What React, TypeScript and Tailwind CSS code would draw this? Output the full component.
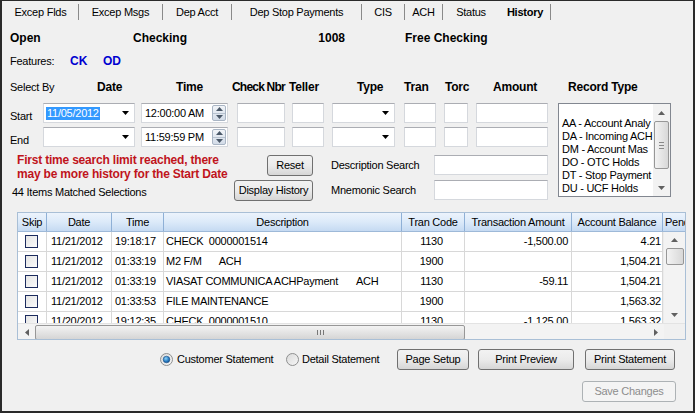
import React from 'react'

const tabs = [
  { label: 'Excep Flds', w: 'w-[75px]', sep: true },
  { label: 'Excep Msgs', w: 'w-[83px]', sep: true },
  { label: 'Dep Acct', w: 'w-[68px]', sep: true },
  { label: 'Dep Stop Payments', w: 'w-[129px]', sep: true },
  { label: 'CIS', w: 'w-[42px]', sep: true },
  { label: 'ACH', w: 'w-[37px]', sep: true },
  { label: 'Status', w: 'w-[56px]', sep: false },
  { label: 'History', w: 'w-[50px]', sep: true, active: true },
]

const rows = [
  { date: '11/21/2012', time: '19:18:17', desc: 'CHECK  0000001514', extra: '', code: '1130', amt: '-1,500.00', bal: '4.21' },
  { date: '11/21/2012', time: '01:33:19', desc: 'M2 F/M', extra: 'ml-[17px]', code: '1900', amt: '', bal: '1,504.21' },
  { date: '11/21/2012', time: '01:33:19', desc: 'VIASAT COMMUNICA ACHPayment', extra: 'ml-[18px]', code: '1130', amt: '-59.11', bal: '1,504.21' },
  { date: '11/21/2012', time: '01:33:53', desc: 'FILE MAINTENANCE', extra: '', code: '1900', amt: '', bal: '1,563.32' },
  { date: '11/20/2012', time: '19:12:35', desc: 'CHECK  0000001510', extra: '', code: '1130', amt: '-1,125.00', bal: '1,563.32' },
]

const recordTypes = ['', 'AA - Account Analy', 'DA - Incoming ACH', 'DM - Account Mas', 'DO - OTC Holds', 'DT - Stop Payment', 'DU - UCF Holds']

function Arrow({ dir, color = '#000' }: { dir: 'up' | 'down' | 'left' | 'right'; color?: string }) {
  const d = {
    down: 'M0 0h7L3.5 4z',
    up: 'M0 4h7L3.5 0z',
    left: 'M4 0v7L0 3.5z',
    right: 'M0 0v7L4 3.5z',
  }[dir]
  const horiz = dir === 'left' || dir === 'right'
  return (
    <svg width={horiz ? 4 : 7} height={horiz ? 7 : 4} viewBox={horiz ? '0 0 4 7' : '0 0 7 4'}>
      <path d={d} fill={color} />
    </svg>
  )
}

function TextBox({ className = '' }: { className?: string }) {
  return <div className={`h-[20px] bg-white border border-[#d5d8dd] border-t-[#abadb3] ${className}`} />
}

function Combo({ className = '', value }: { className?: string; value?: string }) {
  return (
    <div className={`h-[20px] bg-white border border-[#d5d8dd] border-t-[#abadb3] flex items-center ${className}`}>
      {value && <span className="ml-[2px] px-[1px] bg-[#3399ff] text-white leading-[13px]">{value}</span>}
      <div className="ml-auto w-[18px] h-full flex items-center justify-center">
        <Arrow dir="down" />
      </div>
    </div>
  )
}

function TimeBox({ value }: { value: string }) {
  return (
    <div className="w-[87px] h-[20px] bg-white border border-[#d5d8dd] border-t-[#abadb3] flex items-center pl-[3px]">
      <span>{value}</span>
      <div className="ml-auto mr-[1px] w-[14px] h-[16px] flex flex-col border border-[#a9b5c4] rounded-[2px] bg-gradient-to-b from-[#f1f4f8] to-[#d3dce8]">
        <div className="flex-1 flex items-center justify-center border-b border-[#b8c3d0]">
          <Arrow dir="up" color="#4a5868" />
        </div>
        <div className="flex-1 flex items-center justify-center">
          <Arrow dir="down" color="#4a5868" />
        </div>
      </div>
    </div>
  )
}

function Btn({ className = '', children, disabled }: { className?: string; children: React.ReactNode; disabled?: boolean }) {
  return (
    <div
      className={`h-[21px] flex items-center justify-center whitespace-nowrap rounded-[3px] border ${
        disabled
          ? 'border-[#adb2b5] bg-[#f4f4f4] text-[#8d8d8d]'
          : 'border-[#707070] bg-gradient-to-b from-[#f2f2f2] via-[#ebebeb] to-[#d6d6d6] text-black'
      } ${className}`}
    >
      {children}
    </div>
  )
}

function Radio({ checked }: { checked?: boolean }) {
  return (
    <svg width="13" height="13" viewBox="0 0 13 13">
      <defs>
        <linearGradient id={checked ? 'rg1' : 'rg2'} x1="0" y1="0" x2="1" y2="1">
          <stop offset="0" stopColor="#d9d9d9" />
          <stop offset="1" stopColor="#f7f7f7" />
        </linearGradient>
        <radialGradient id="dot" cx="0.4" cy="0.35" r="0.7">
          <stop offset="0" stopColor="#8ed2f8" />
          <stop offset="0.6" stopColor="#2b7fc4" />
          <stop offset="1" stopColor="#0f4a8a" />
        </radialGradient>
      </defs>
      <circle cx="6.5" cy="6.5" r="6" fill={`url(#${checked ? 'rg1' : 'rg2'})`} stroke="#8e8f8f" />
      {checked && <circle cx="6.5" cy="6.5" r="3.3" fill="url(#dot)" stroke="#1b4f86" strokeWidth="0.6" />}
    </svg>
  )
}

function CheckBox() {
  return <div className="w-[13px] h-[13px] border border-[#1c2b5e] bg-gradient-to-br from-[#e4e4e4] to-[#fbfbfb]" />
}

export default function App() {
  return (
    <div className="w-[695px] h-[413px] overflow-hidden bg-[#f0f0f0] border-x-2 border-b-2 border-t border-[#2a2a2a] flex flex-col text-[11px] tracking-[-0.25px] text-black whitespace-nowrap font-['Liberation_Sans',Arial,sans-serif]">
      {/* Tabs */}
      <div className="h-[20px] flex pl-[1px]">
        {tabs.map((t) => (
          <React.Fragment key={t.label}>
            <div className={`${t.w} h-full flex items-center justify-center pt-[2px] ${t.active ? 'font-bold' : ''}`}>{t.label}</div>
            <div className={`w-px h-[16px] self-end mb-[1px] ${t.sep ? 'bg-[#8a8a8a]' : 'bg-transparent'}`} />
          </React.Fragment>
        ))}
      </div>

      {/* Account summary */}
      <div className="flex h-[16px] mt-[9px] items-center font-bold text-[12px] tracking-normal">
        <div className="ml-[8px] w-[123px]">Open</div>
        <div className="w-[151px]">Checking</div>
        <div className="w-[61px] text-right">1008</div>
        <div className="ml-[60px]">Free Checking</div>
      </div>

      <div className="flex h-[16px] mt-[7px] items-center">
        <div className="ml-[8px] w-[60px]">Features:</div>
        <div className="w-[33px] font-bold text-[12px] tracking-normal text-[#0000d0]">CK</div>
        <div className="font-bold text-[12px] tracking-normal text-[#0000d0]">OD</div>
      </div>

      {/* Column labels */}
      <div className="flex h-[16px] mt-[10px] items-center">
        <div className="ml-[8px] w-[87px]">Select By</div>
        <div className="flex font-bold text-[12px] tracking-[-0.2px]">
          <div className="w-[79px]">Date</div>
          <div className="w-[56px]">Time</div>
          <div className="w-[57px] tracking-[-0.8px]">Check Nbr</div>
          <div className="w-[68px]">Teller</div>
          <div className="w-[47px]">Type</div>
          <div className="w-[41px]">Tran</div>
          <div className="w-[48px]">Torc</div>
          <div className="w-[75px]">Amount</div>
          <div>Record Type</div>
        </div>
      </div>

      {/* Selection form */}
      <div className="flex mt-[8px]">
        <div className="ml-[8px] w-[538px] flex flex-col">
          <div className="flex h-[20px]">
            <div className="w-[33px] pt-[7px] leading-[13px]">Start</div>
            <Combo className="w-[92px]" value="11/05/2012" />
            <div className="ml-[6px]"><TimeBox value="12:00:00 AM" /></div>
            <TextBox className="ml-[9px] w-[48px]" />
            <TextBox className="ml-[7px] w-[32px]" />
            <Combo className="ml-[8px] w-[63px]" />
            <TextBox className="ml-[9px] w-[32px]" />
            <TextBox className="ml-[8px] w-[24px]" />
            <TextBox className="ml-[8px] w-[72px]" />
          </div>
          <div className="flex h-[20px] mt-[4px]">
            <div className="w-[33px] pt-[7px] leading-[13px]">End</div>
            <Combo className="w-[92px]" />
            <div className="ml-[6px]"><TimeBox value="11:59:59 PM" /></div>
            <TextBox className="ml-[9px] w-[48px]" />
            <TextBox className="ml-[7px] w-[32px]" />
            <Combo className="ml-[8px] w-[63px]" />
            <TextBox className="ml-[9px] w-[32px]" />
            <TextBox className="ml-[8px] w-[24px]" />
            <TextBox className="ml-[8px] w-[72px]" />
          </div>

          <div className="flex mt-[5px]">
            <div className="w-[225px] flex flex-col">
              <div className="pl-[7px] pt-[1px] leading-[14px] font-bold text-[12px] tracking-[-0.2px] text-[#c0141c]">
                <div>First time search limit reached, there</div>
                <div>may be more history for the Start Date</div>
              </div>
              <div className="mt-[5px] pl-[2px] leading-[13px]">44 Items Matched Selections</div>
            </div>
            <div className="w-[78px] flex flex-col items-end pt-[3px]">
              <Btn className="w-[46px]">Reset</Btn>
              <Btn className="mt-[4px] w-[79px]">Display History</Btn>
            </div>
            <div className="w-[121px] pl-[18px] pt-[3px] flex flex-col">
              <div className="h-[20px] leading-[20px]">Description Search</div>
              <div className="h-[20px] leading-[20px] mt-[5px]">Mnemonic Search</div>
            </div>
            <div className="w-[114px] pt-[3px] flex flex-col">
              <TextBox className="w-[114px]" />
              <TextBox className="w-[114px] mt-[5px]" />
            </div>
          </div>
        </div>

        {/* Record type list */}
        <div className="ml-[10px] w-[113px] h-[94px] bg-white border border-[#828790] flex">
          <div className="flex-1 overflow-hidden pl-[3px]">
            {recordTypes.map((r, i) => (
              <div key={i} className="h-[13px] leading-[13px]">{r}</div>
            ))}
          </div>
          <div className="w-[17px] bg-[#f2f2f2] flex flex-col items-center">
            <div className="h-[17px] flex items-center justify-center"><Arrow dir="up" color="#606060" /></div>
            <div className="w-[15px] h-[48px] rounded-[2px] border border-[#979797] bg-gradient-to-r from-[#f3f3f3] to-[#d8d8d8] flex flex-col items-center justify-center gap-[2px]">
              <div className="w-[5px] h-px bg-[#888]" />
              <div className="w-[5px] h-px bg-[#888]" />
              <div className="w-[5px] h-px bg-[#888]" />
            </div>
            <div className="flex-1" />
            <div className="h-[17px] flex items-center justify-center"><Arrow dir="down" color="#606060" /></div>
          </div>
        </div>
      </div>

      {/* History grid */}
      <div className="ml-[15px] mt-[11px] w-[669px] h-[128px] border border-[#a9bfd6] bg-white flex flex-col overflow-hidden">
        <div className="h-[19px] flex shrink-0 bg-gradient-to-b from-[#ecf3fc] via-[#dceaf9] to-[#c5daf2] border-b border-[#9eb9d8]">
          <div className="w-[29px] shrink-0 border-r border-[#8fb0d6] flex items-center justify-center">Skip</div>
          <div className="w-[65px] shrink-0 border-r border-[#8fb0d6] flex items-center justify-center">Date</div>
          <div className="w-[52px] shrink-0 border-r border-[#8fb0d6] flex items-center justify-center">Time</div>
          <div className="w-[238px] shrink-0 border-r border-[#8fb0d6] flex items-center justify-center">Description</div>
          <div className="w-[63px] shrink-0 border-r border-[#8fb0d6] flex items-center justify-center">Tran Code</div>
          <div className="w-[107px] shrink-0 border-r border-[#8fb0d6] flex items-center justify-center">Transaction Amount</div>
          <div className="w-[91px] shrink-0 border-r border-[#8fb0d6] flex items-center justify-center">Account Balance</div>
          <div className="w-[60px] shrink-0 flex items-center pl-[2px]">Pending</div>
        </div>
        <div className="h-[91px] flex shrink-0">
          <div className="w-[645px] overflow-hidden">
            {rows.map((r, i) => (
              <div key={i} className="h-[20px] flex border-b border-[#d8d8d8]">
                <div className="w-[29px] shrink-0 border-r border-[#d8d8d8] flex items-center pl-[7px]"><CheckBox /></div>
                <div className="w-[65px] shrink-0 border-r border-[#d8d8d8] flex items-center pl-[4px]">{r.date}</div>
                <div className="w-[52px] shrink-0 border-r border-[#d8d8d8] flex items-center pl-[3px]">{r.time}</div>
                <div className="w-[238px] shrink-0 border-r border-[#d8d8d8] flex items-center pl-[2px] whitespace-pre">
                  {r.desc}
                  {r.extra && <span className={r.extra}>ACH</span>}
                </div>
                <div className="w-[63px] shrink-0 border-r border-[#d8d8d8] flex items-center justify-center pr-[3px]">{r.code}</div>
                <div className="w-[107px] shrink-0 border-r border-[#d8d8d8] flex items-center justify-end pr-[3px]">{r.amt}</div>
                <div className="w-[91px] shrink-0 border-r border-[#d8d8d8] flex items-center justify-end pr-[1px]">{r.bal}</div>
              </div>
            ))}
          </div>
          <div className="w-[22px] bg-[#f3f3f3] border-l border-[#ececec] flex flex-col items-center">
            <div className="h-[16px] flex items-center justify-center"><Arrow dir="up" color="#606060" /></div>
            <div className="w-[18px] h-[17px] rounded-[2px] border border-[#979797] bg-gradient-to-r from-[#f3f3f3] to-[#d8d8d8]" />
            <div className="flex-1" />
            <div className="h-[17px] flex items-center justify-center"><Arrow dir="down" color="#606060" /></div>
          </div>
        </div>
        <div className="h-[17px] flex shrink-0 border-t border-[#e3e3e3]">
          <div className="w-[646px] bg-[#f3f3f3] flex items-center">
            <div className="w-[17px] flex items-center justify-center"><Arrow dir="left" color="#606060" /></div>
            <div className="w-[430px] h-[15px] rounded-[2px] border border-[#979797] bg-gradient-to-b from-[#f3f3f3] to-[#d5d5d5] flex items-center">
              <div className="ml-[281px] flex gap-[2px]">
                <div className="w-px h-[5px] bg-[#777]" />
                <div className="w-px h-[5px] bg-[#777]" />
                <div className="w-px h-[5px] bg-[#777]" />
              </div>
            </div>
            <div className="flex-1" />
            <div className="w-[17px] flex items-center justify-center"><Arrow dir="right" color="#606060" /></div>
          </div>
          <div className="flex-1 bg-[#f0f0f0]" />
        </div>
      </div>

      {/* Print options */}
      <div className="flex items-center h-[21px] mt-[9px]">
        <div className="ml-[158px] flex"><Radio checked /></div>
        <div className="ml-[4px] w-[105px]">Customer Statement</div>
        <div className="ml-[4px] flex"><Radio /></div>
        <div className="ml-[3px] w-[93px]">Detail Statement</div>
        <Btn className="ml-[2px] w-[72px]">Page Setup</Btn>
        <Btn className="ml-[9px] w-[96px]">Print Preview</Btn>
        <Btn className="ml-[11px] w-[90px]">Print Statement</Btn>
      </div>
      <div className="flex mt-[11px]">
        <Btn className="ml-[580px] w-[94px]" disabled>Save Changes</Btn>
      </div>
    </div>
  )
}
